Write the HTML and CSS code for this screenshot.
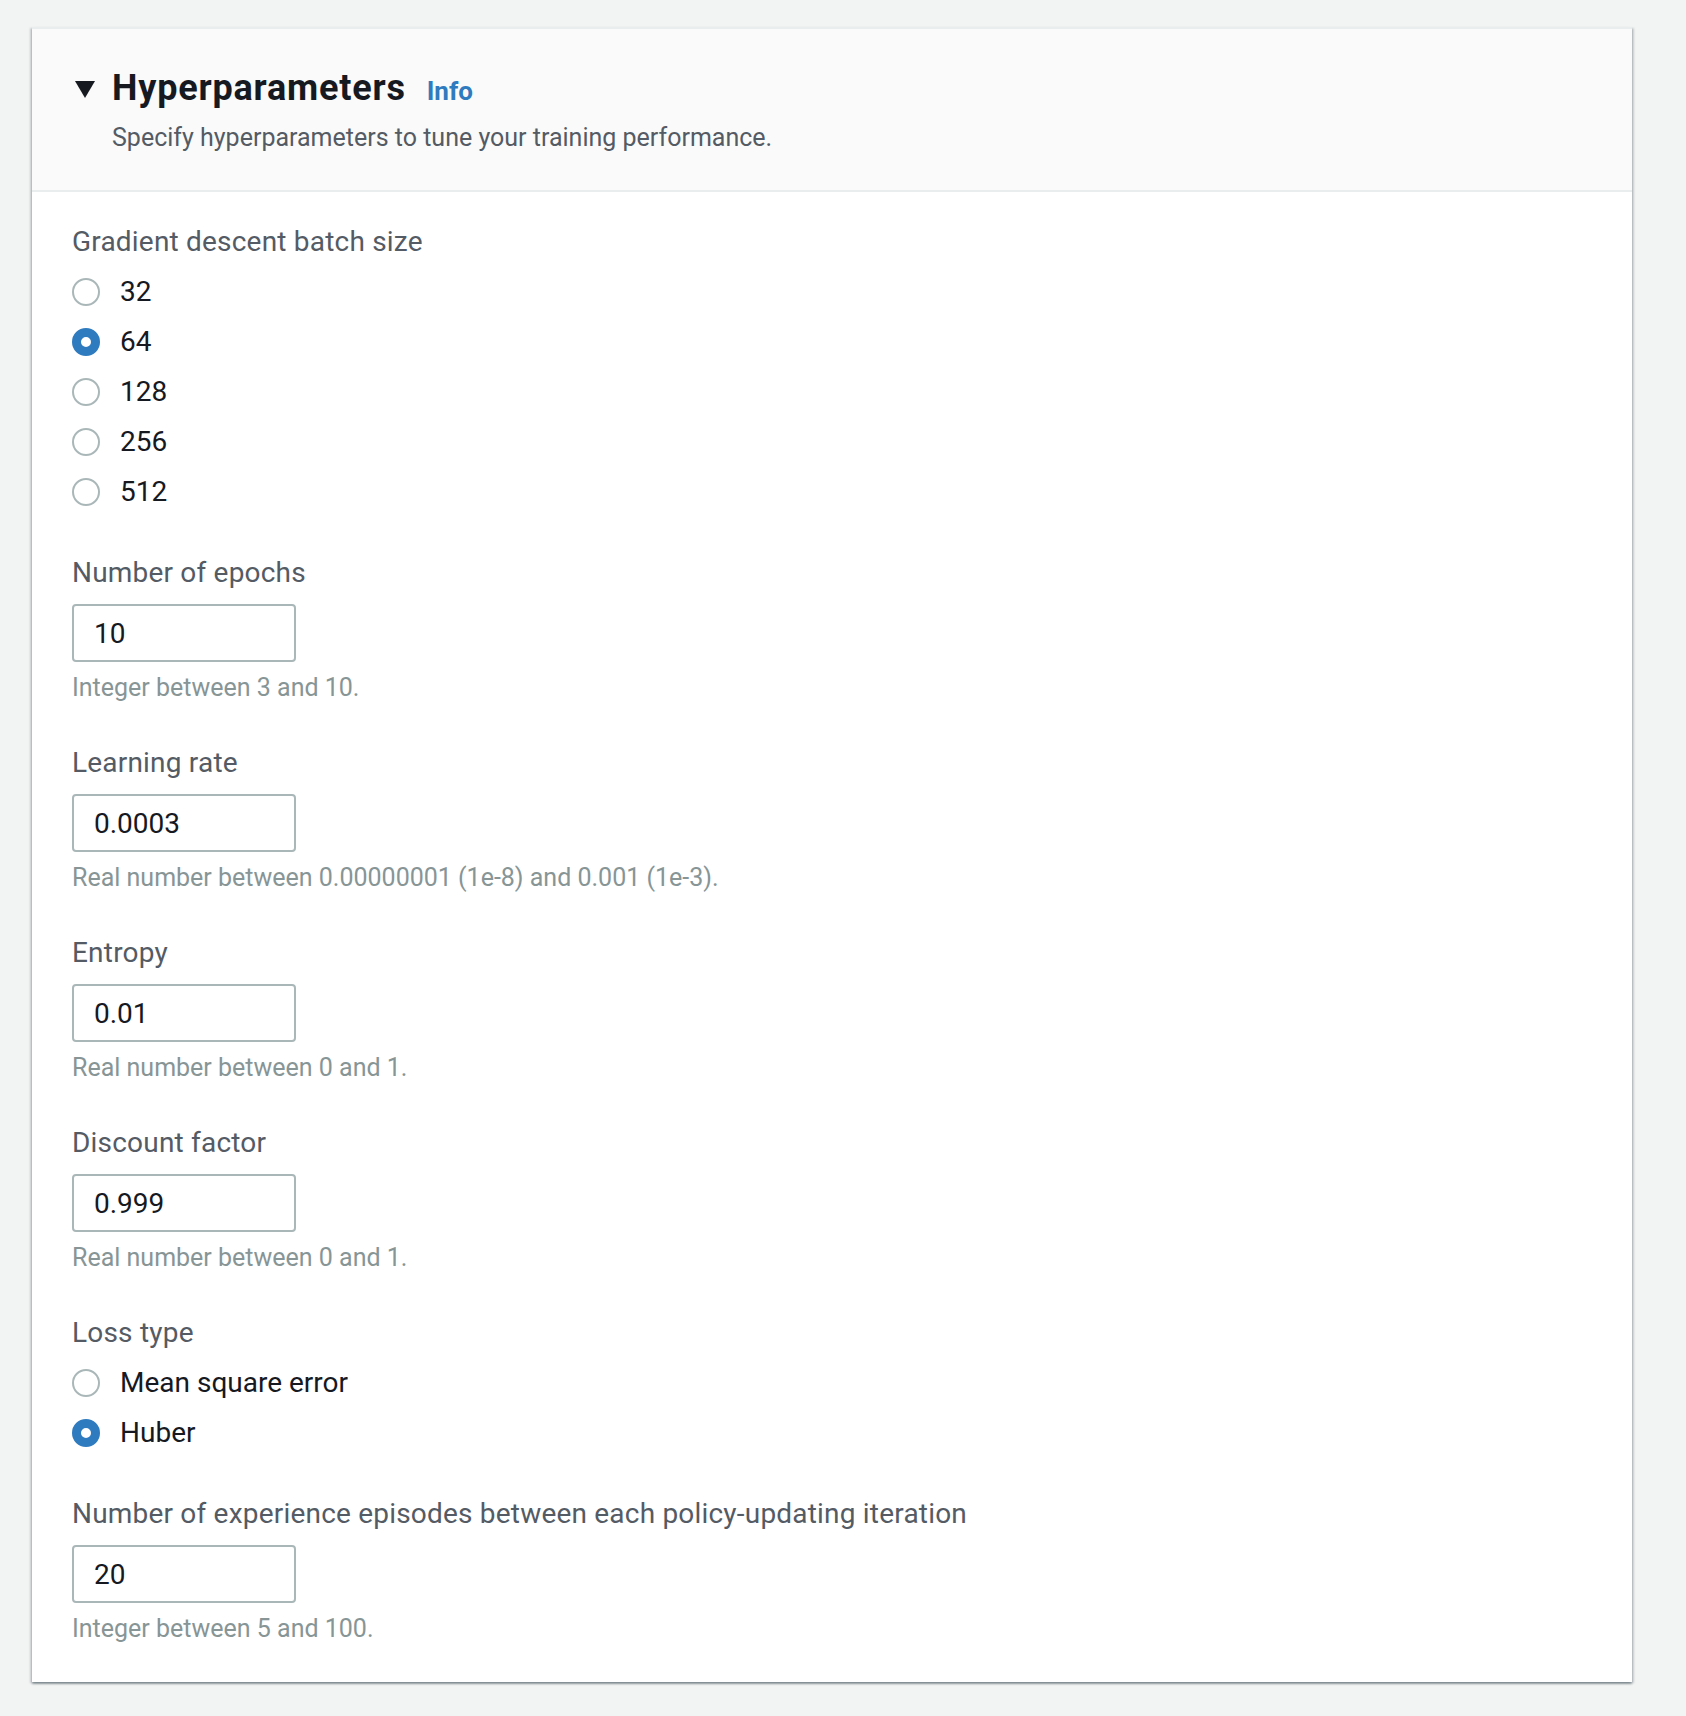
FILE: index.html
```html
<!DOCTYPE html>
<html lang="en">
<head>
<meta charset="utf-8">
<title>Hyperparameters</title>
<link rel="stylesheet" href="styles.css">
</head>
<body>
<div class="page">
  <section class="container">
    <header class="container-header">
      <div class="title-row">
        <svg class="caret" width="20" height="17" viewBox="0 0 20 17" aria-hidden="true"><polygon points="0,0 20,0 10,17" fill="#16191f"/></svg>
        <h2 class="title">Hyperparameters</h2>
        <a class="info" href="#">Info</a>
      </div>
      <p class="description">Specify hyperparameters to tune your training performance.</p>
    </header>
    <div class="container-body">
      <div class="field">
        <div class="label">Gradient descent batch size</div>
        <div class="radio-group">
          <label class="radio"><span class="radio-circle"></span><span class="radio-label">32</span></label>
          <label class="radio"><span class="radio-circle checked"></span><span class="radio-label">64</span></label>
          <label class="radio"><span class="radio-circle"></span><span class="radio-label">128</span></label>
          <label class="radio"><span class="radio-circle"></span><span class="radio-label">256</span></label>
          <label class="radio"><span class="radio-circle"></span><span class="radio-label">512</span></label>
        </div>
      </div>
      <div class="field">
        <div class="label">Number of epochs</div>
        <input class="text-input" type="text" value="10">
        <div class="hint">Integer between 3 and 10.</div>
      </div>
      <div class="field">
        <div class="label">Learning rate</div>
        <input class="text-input" type="text" value="0.0003">
        <div class="hint">Real number between 0.00000001 (1e-8) and 0.001 (1e-3).</div>
      </div>
      <div class="field">
        <div class="label">Entropy</div>
        <input class="text-input" type="text" value="0.01">
        <div class="hint">Real number between 0 and 1.</div>
      </div>
      <div class="field">
        <div class="label">Discount factor</div>
        <input class="text-input" type="text" value="0.999">
        <div class="hint">Real number between 0 and 1.</div>
      </div>
      <div class="field">
        <div class="label">Loss type</div>
        <div class="radio-group">
          <label class="radio"><span class="radio-circle"></span><span class="radio-label">Mean square error</span></label>
          <label class="radio"><span class="radio-circle checked"></span><span class="radio-label">Huber</span></label>
        </div>
      </div>
      <div class="field">
        <div class="label">Number of experience episodes between each policy-updating iteration</div>
        <input class="text-input" type="text" value="20">
        <div class="hint">Integer between 5 and 100.</div>
      </div>
    </div>
  </section>
</div>
</body>
</html>
```

FILE: styles.css
```css
html, body {
  margin: 0;
  padding: 0;
  background: #f2f3f3;
  font-family: Roboto, "Liberation Sans", Arial, sans-serif;
}

.page {
  padding: 27px 0 34px 32px;
}

.container {
  width: 1600px;
  background: #ffffff;
  border-top: 2px solid #eaeded;
  box-shadow: 0 2px 2px 0 rgba(0, 28, 36, 0.35), 2px 1px 2px 0 rgba(0, 28, 36, 0.15), -2px 1px 2px 0 rgba(0, 28, 36, 0.15);
}

.container-header {
  background: #fafafa;
  border-bottom: 2px solid #eaeded;
  padding: 38px 40px 36px 43px;
}

.title-row {
  display: flex;
  align-items: baseline;
}

.caret {
  flex: none;
  margin-right: 17px;
  align-self: center;
  position: relative;
  top: 1px;
}

.title {
  margin: 0;
  font-size: 36px;
  line-height: 42px;
  font-weight: 700;
  letter-spacing: 0.8px;
  color: #16191f;
}

.info {
  margin-left: 21px;
  font-size: 26px;
  font-weight: 700;
  color: #2f7bbf;
  text-decoration: none;
}

.description {
  margin: 13px 0 0 37px;
  font-size: 25px;
  line-height: 32px;
  color: #545b64;
}

.container-body {
  display: flex;
  flex-direction: column;
  gap: 38px;
  padding: 32px 40px 34px 40px;
}

.field {
  display: flex;
  flex-direction: column;
  align-items: flex-start;
}

.label {
  font-size: 28px;
  line-height: 36px;
  letter-spacing: 0.2px;
  color: #545b64;
}

.radio-group {
  display: flex;
  flex-direction: column;
  margin-top: 7px;
}

.radio {
  display: flex;
  align-items: center;
  height: 50px;
  gap: 20px;
}

.radio-circle {
  box-sizing: border-box;
  width: 28px;
  height: 28px;
  border-radius: 50%;
  border: 2px solid #aab7b8;
  background: #ffffff;
  flex: none;
}

.radio-circle.checked {
  border: 9px solid #2f7bbf;
  background: #ffffff;
}

.radio-label {
  font-size: 28px;
  line-height: 36px;
  color: #16191f;
}

.text-input {
  box-sizing: border-box;
  margin: 13px 0 0 0;
  width: 224px;
  height: 58px;
  border: 2px solid #aab7b8;
  border-radius: 4px;
  padding: 0 20px;
  font-family: Roboto, "Liberation Sans", Arial, sans-serif;
  font-size: 28px;
  color: #16191f;
  background: #ffffff;
  outline: none;
}

.hint {
  margin-top: 7px;
  font-size: 25px;
  line-height: 38px;
  color: #879596;
}
```
